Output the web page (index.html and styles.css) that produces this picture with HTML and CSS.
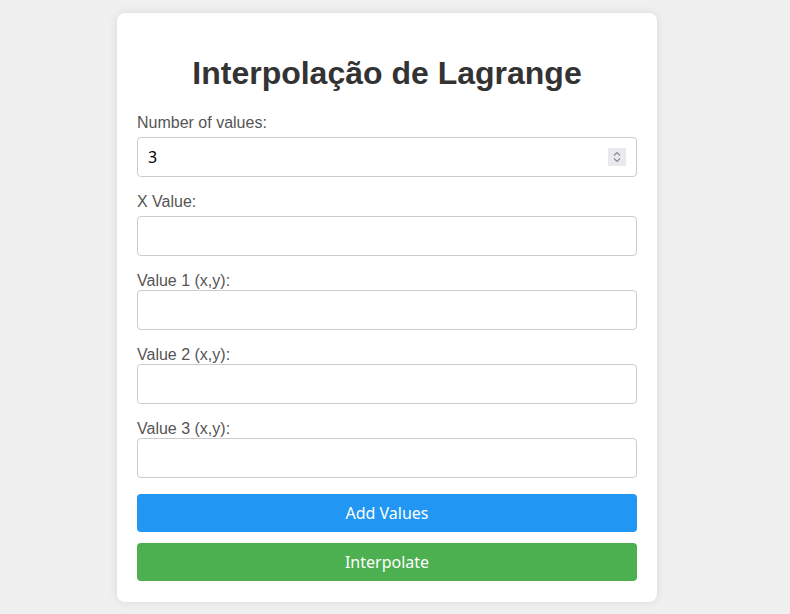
FILE: index.html
```html
<!DOCTYPE html>
<html lang="pt">
<head>
<meta charset="utf-8">
<title>Interpolação de Lagrange</title>
<link rel="stylesheet" href="styles.css">
</head>
<body>
<div class="card">
  <h1 class="title">Interpolação de Lagrange</h1>
  <label class="field-label" for="n">Number of values:</label>
  <div class="number-wrap">
    <input class="field" id="n" type="number" value="3">
    <span class="spinner" aria-hidden="true">
      <svg width="18" height="18" viewBox="0 0 18 18">
        <path d="M6 7.5 L9 4.5 L12 7.5" fill="none" stroke="#8a8a94" stroke-width="1.2"/>
        <path d="M6 10.5 L9 13.5 L12 10.5" fill="none" stroke="#8a8a94" stroke-width="1.2"/>
      </svg>
    </span>
  </div>
  <label class="field-label" for="x">X Value:</label>
  <input class="field" id="x" type="text">
  <div class="values">
    <div class="value-row">
      <label class="value-label">Value 1 (x,y):</label>
      <input class="field" type="text">
    </div>
    <div class="value-row">
      <label class="value-label">Value 2 (x,y):</label>
      <input class="field" type="text">
    </div>
    <div class="value-row">
      <label class="value-label">Value 3 (x,y):</label>
      <input class="field" type="text">
    </div>
  </div>
  <button class="btn btn-blue">Add Values</button>
  <button class="btn btn-green">Interpolate</button>
</div>
</body>
</html>
```
FILE: styles.css
```css
html, body {
  margin: 0;
  padding: 0;
  background: #f0f0f0;
}
body {
  font-family: "Liberation Sans", Arial, sans-serif;
  font-size: 16px;
  color: #333;
  padding-top: 13px;
  padding-bottom: 12px;
}
.card {
  box-sizing: border-box;
  width: 540px;
  margin-left: 117px;
  padding: 20px 20px 21px;
  background: #fff;
  border-radius: 8px;
  box-shadow: 0 0 10px rgba(0, 0, 0, 0.1);
}
.title {
  margin: 22px 0 22px;
  text-align: center;
  font-size: 32px;
  font-weight: bold;
  color: #333;
  line-height: 37px;
}
.field-label {
  display: block;
  color: #555;
  margin-bottom: 5px;
  line-height: 18px;
}
.value-label {
  display: block;
  color: #555;
  line-height: 18px;
}
.number-wrap {
  position: relative;
}
.field {
  display: block;
  box-sizing: border-box;
  width: 100%;
  height: 40px;
  margin: 0 0 16px;
  padding: 10px;
  border: 1px solid #ccc;
  border-radius: 4px;
  font-family: "Noto Sans", "DejaVu Sans", sans-serif;
  font-size: 16px;
  color: #000;
  background: #fff;
  outline: none;
}
.field::-webkit-inner-spin-button,
.field::-webkit-outer-spin-button {
  -webkit-appearance: none;
  margin: 0;
}
.spinner {
  position: absolute;
  top: 11px;
  right: 11px;
  width: 18px;
  height: 18px;
  background: #e9e9ee;
  display: flex;
}
.btn {
  display: block;
  box-sizing: border-box;
  width: 100%;
  height: 38px;
  border: none;
  border-radius: 4px;
  color: #fff;
  font-family: "Noto Sans", "DejaVu Sans", sans-serif;
  font-size: 16px;
  cursor: pointer;
}
.btn-blue {
  background: #2196f3;
  margin-bottom: 11px;
}
.btn-green {
  background: #4caf50;
}
```
